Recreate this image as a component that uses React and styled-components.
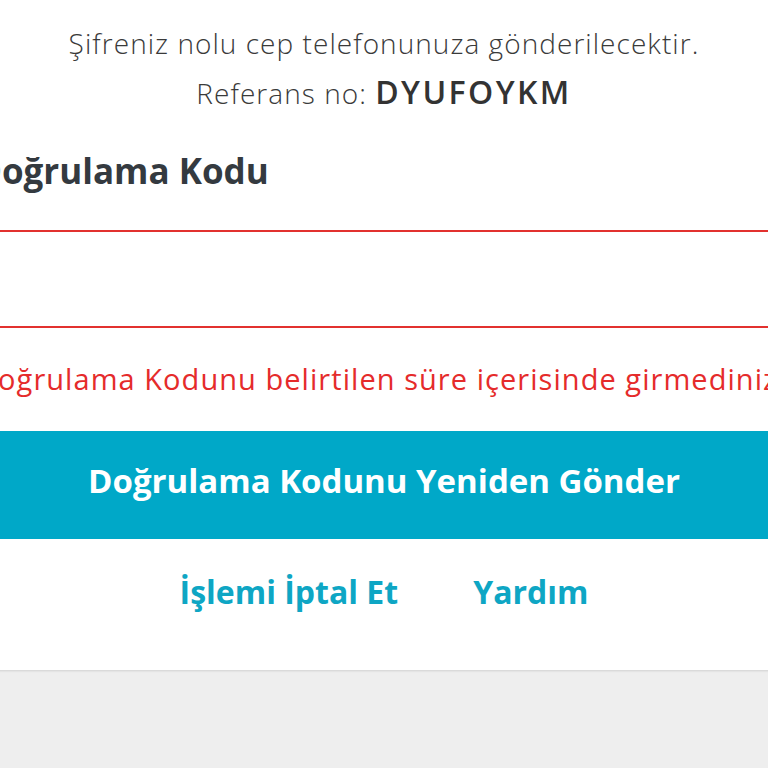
import React from "react";
import styled, { createGlobalStyle } from "styled-components";

const Global = createGlobalStyle`
  html, body { margin: 0; padding: 0; background: #eeeeee; overflow: hidden; }
  body { font-family: "Open Sans", "Noto Sans", sans-serif; }
`;

const Page = styled.div`
  width: 768px;
  height: 768px;
  overflow: hidden;
  background: #eeeeee;
`;

const Card = styled.div`
  margin-left: -24px;
  width: 816px;
  background: #ffffff;
  height: 670px;
  box-sizing: border-box;
  padding-top: 26px;
  display: flex;
  flex-direction: column;
  box-shadow: 0 1px 2px rgba(0,0,0,0.12);
`;

const Info = styled.p`
  margin: ${p => p.$mt || 0}px 0 0;
  text-align: center;
  color: #3a3a3a;
  font-size: 28px;
  font-weight: 300;
  letter-spacing: 1.05px;
  line-height: ${p => p.$lh || 34}px;
`;

const RefCode = styled.span`
  font-size: 32px;
  font-weight: 600;
  letter-spacing: 2.4px;
  color: #333;
`;

const Heading = styled.h2`
  margin: 33px 0 0;
  font-size: 35px;
  font-weight: 700;
  color: #343a40;
  line-height: 40px;
`;

const Input = styled.input`
  margin-top: 39px;
  height: 98px;
  box-sizing: border-box;
  border: 2px solid #e2312f;
  background: #fff;
  outline: none;
  font-size: 26px;
`;

const ErrorText = styled.p`
  margin: 34px 0 0;
  color: #e52b2b;
  font-size: 29px;
  font-weight: 400;
  letter-spacing: 1.05px;
  line-height: 34px;
  white-space: nowrap;
`;

const Button = styled.button`
  margin-top: 35px;
  height: 108px;
  padding: 0 0 9px;
  border: none;
  background: #00a8c8;
  color: #ffffff;
  font-family: "Open Sans", "Noto Sans", sans-serif;
  font-size: 33px;
  font-weight: 700;
  cursor: pointer;
`;

const Links = styled.div`
  display: flex;
  justify-content: center;
  gap: 75px;
  margin-top: 33px;
`;

const LinkText = styled.a`
  color: #0ea6c4;
  font-size: 32px;
  font-weight: 700;
  line-height: 40px;
  text-decoration: none;
`;

export default function App() {
  return (
    <>
      <Global />
      <Page>
        <Card>
          <Info>Şifreniz nolu cep telefonunuza gönderilecektir.</Info>
          <Info $lh={50} $mt={7}>
            Referans no: <RefCode>DYUFOYKM</RefCode>
          </Info>
          <Heading>Doğrulama Kodu</Heading>
          <Input type="text" />
          <ErrorText>Doğrulama Kodunu belirtilen süre içerisinde girmediniz.</ErrorText>
          <Button>Doğrulama Kodunu Yeniden Gönder</Button>
          <Links>
            <LinkText href="#">İşlemi İptal Et</LinkText>
            <LinkText href="#">Yardım</LinkText>
          </Links>
        </Card>
      </Page>
    </>
  );
}
